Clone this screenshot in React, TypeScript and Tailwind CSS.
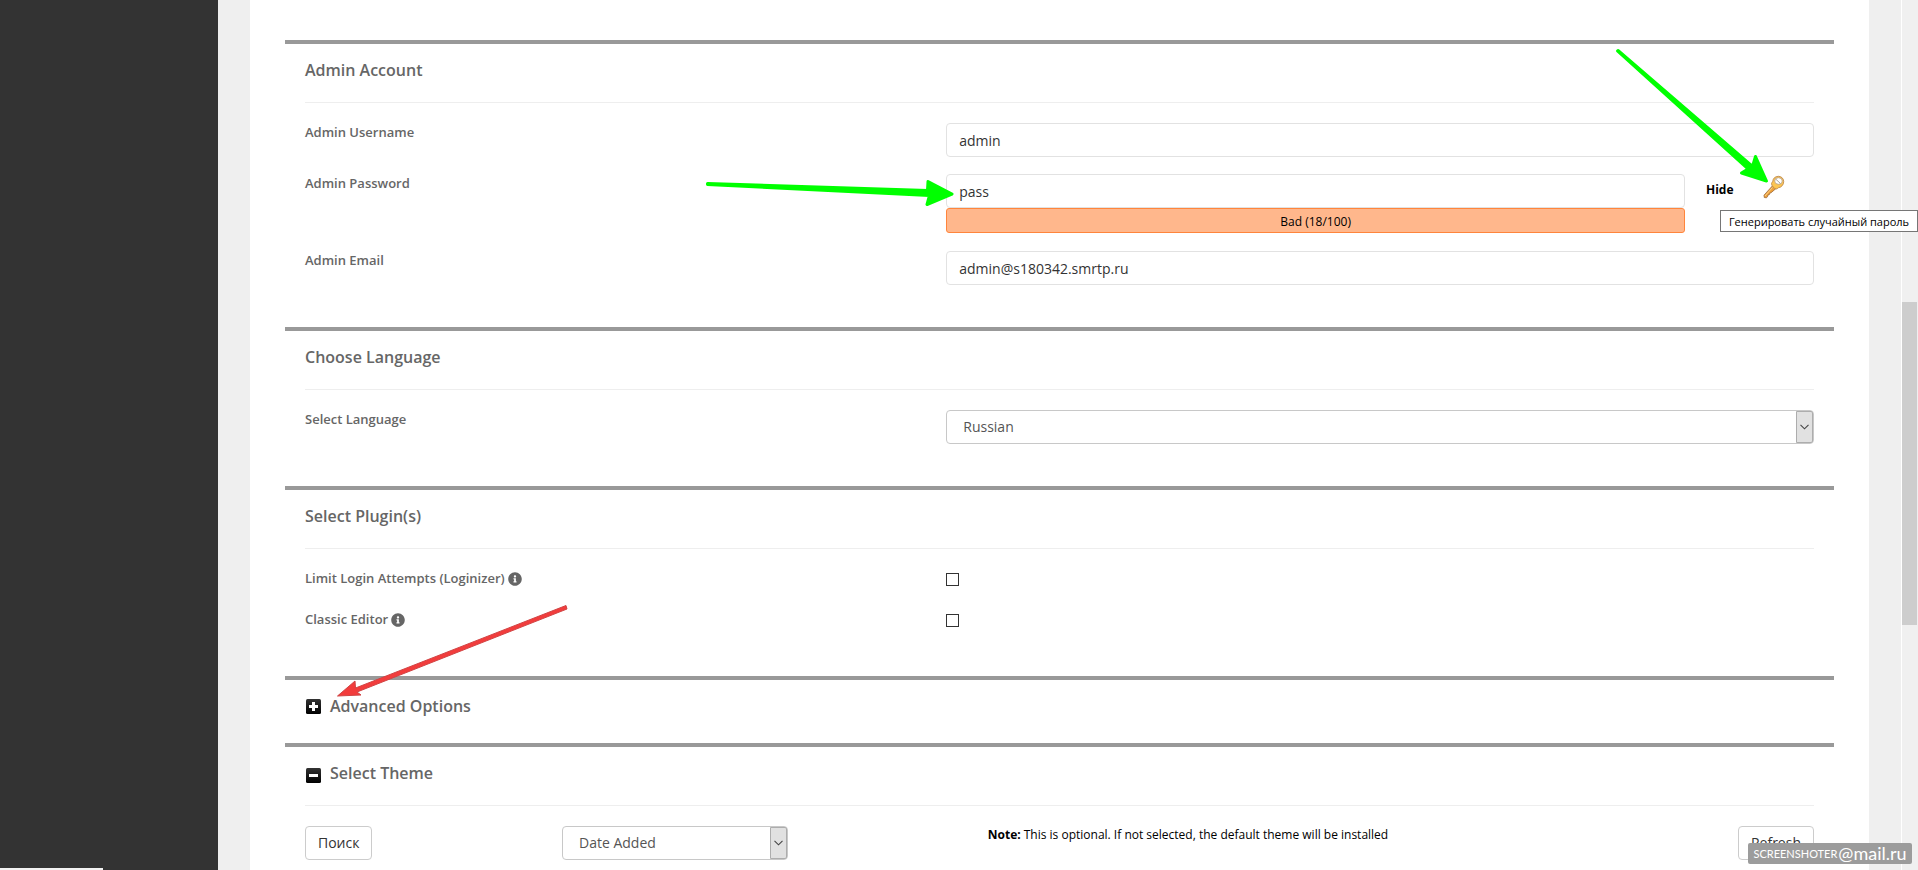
import { useState, type ReactNode } from "react";
import { FaInfoCircle } from "react-icons/fa";

type SectionProps = {
  title: string;
  icon?: ReactNode;
  children?: ReactNode;
};

function Section({ title, icon, children }: SectionProps) {
  return (
    <section className="border-t-4 border-[#999999] px-5">
      <h2 className="flex h-[58px] items-center gap-2 pb-[6px] text-base font-semibold text-[#666666]">
        {icon}
        {title}
      </h2>
      {children && <div className="border-t border-[#eeeeee] pt-5">{children}</div>}
    </section>
  );
}

type RowProps = {
  id: string;
  label: string;
  info?: boolean;
  children: ReactNode;
};

function Row({ id, label, info, children }: RowProps) {
  return (
    <div className="-mx-[15px] grid grid-cols-[5fr_7fr]">
      <div className="flex h-[18px] items-center px-[15px]">
        <label htmlFor={id} className="text-[13px] leading-[18px] font-semibold text-[#666666]">
          {label}
        </label>
        {info && <FaInfoCircle size={14} className="mt-[2px] ml-[3px] text-[#666666]" />}
      </div>
      <div className="px-[15px]">{children}</div>
    </div>
  );
}

type TextFieldProps = {
  id: string;
  value: string;
  onChange: (value: string) => void;
};

function TextField({ id, value, onChange }: TextFieldProps) {
  return (
    <input
      id={id}
      type="text"
      value={value}
      onChange={(e) => onChange(e.target.value)}
      className="block h-[34px] w-full rounded-[4px] border border-[#e2e2e2] bg-white px-3 text-sm text-[#333333]"
    />
  );
}

type SelectFieldProps = {
  id: string;
  options: string[];
  label?: string;
};

function SelectField({ id, options, label }: SelectFieldProps) {
  return (
    <div className="relative">
      <select
        id={id}
        aria-label={label}
        className="block h-[34px] w-full appearance-none rounded-[4px] border border-[#c8c8c8] bg-white pr-6 pl-4 text-sm text-[#555555]"
      >
        {options.map((o) => (
          <option key={o}>{o}</option>
        ))}
      </select>
      <span className="pointer-events-none absolute top-px right-px bottom-px flex w-[17px] items-center justify-center rounded-r-[2px] border border-[#adadad] bg-[#e1e1e1]">
        <svg width="9" height="6" viewBox="0 0 9 6" fill="none" stroke="#444444" strokeWidth="1.1">
          <path d="M.5 .8 4.5 4.8 8.5 .8" />
        </svg>
      </span>
    </div>
  );
}

function ToggleIcon({ open }: { open: boolean }) {
  return (
    <svg width="17" height="20" viewBox="0 0 17 20" aria-hidden="true">
      <defs>
        <linearGradient id="toggle" x1="0" y1="0" x2="0" y2="1">
          <stop offset="0" stopColor="#333333" />
          <stop offset="1" stopColor="#000000" />
        </linearGradient>
      </defs>
      {open ? (
        <>
          <rect x="1" y="5" width="15" height="15" rx="1.5" fill="url(#toggle)" />
          <path d="M4 11h9v3H4z" fill="#ffffff" />
        </>
      ) : (
        <>
          <rect x="1" y="3" width="15" height="15" rx="1.5" fill="url(#toggle)" />
          <path d="M4 9h9v3H4zM7 6h3v9H7z" fill="#ffffff" />
        </>
      )}
    </svg>
  );
}

function KeyIcon() {
  return (
    <svg width="22" height="24" viewBox="0 0 22 24" aria-hidden="true">
      <path
        d="M9.300 11 1 20.200l.3 2.300 2.200.3 1.300-1.700.2-1.200 1.500-.5.300-1.300 1.300-.4L13 13.500z"
        fill="#eea038"
        stroke="#9c6a3a"
        strokeWidth=".8"
      />
      <path d="m9.500 12.500-7.500 8.500" stroke="#fbd08a" strokeWidth="1" />
      <path
        d="M8.500 8.500c0-.8.6-1.500 1.200-1.800A6 6 0 0 1 15.500 1.300 5.200 5.200 0 0 1 20.700 6.500a6.200 6.200 0 0 1-5.500 6.300c-.6.8-1.200 1.200-2 1.200-1.500 0-4.700-3-4.700-5.500z"
        fill="#fcc552"
        stroke="#c08a4c"
        strokeWidth=".9"
      />
      <ellipse cx="15.500" cy="6" rx="3.800" ry="3.300" fill="#ffffff" stroke="#b59a7c" strokeWidth=".8" />
      <path d="m12.800 4.200 4.700 4.300" stroke="#a8a39b" strokeWidth="1" />
    </svg>
  );
}

function Annotations() {
  return (
    <svg
      className="pointer-events-none absolute top-0 left-0"
      width="1918"
      height="870"
      viewBox="0 0 1918 870"
      aria-hidden="true"
    >
      <g fill="#00ff00" stroke="#00ff00" strokeWidth="3" strokeLinejoin="round">
        <path d="M707.500 183.500 927.500 190.500 928 181.500 952 194 927 204.500 929.500 195.500 707.500 184.500z" />
        <path d="M1618 50.500 1752.500 166.500 1755.500 156.500 1766.500 181 1741.500 173 1748 169 1617.500 51z" />
      </g>
      <path
        d="M566 605.500 567 609 357 692 361 695 337.500 696 355 681 355.500 688z"
        fill="#f23c3c"
        stroke="#d04444"
        strokeWidth="1"
      />
    </svg>
  );
}

export default function App() {
  const [username, setUsername] = useState("admin");
  const [password, setPassword] = useState("pass");
  const [email, setEmail] = useState("admin@s180342.smrtp.ru");

  return (
    <div className="relative flex min-h-screen overflow-hidden bg-[#efefef] font-['Open_Sans',sans-serif]">
      <aside className="relative w-[218px] shrink-0 bg-[#333333]">
        <div className="absolute bottom-0 left-0 h-[2px] w-[103px] bg-[#f2f2f2]" />
      </aside>

      <main className="mx-8 min-w-0 flex-1 bg-white px-[35px] pt-10 pb-[10px]">
        <Section title="Admin Account">
          <div className="flex flex-col gap-[17px] pb-[42px]">
            <Row id="username" label="Admin Username">
              <TextField id="username" value={username} onChange={setUsername} />
            </Row>
            <Row id="password" label="Admin Password">
              <div className="flex items-start pb-px">
                <div className="flex-1">
                  <TextField id="password" value={password} onChange={setPassword} />
                  <div className="h-[25px] rounded-[3px] border border-[#ff853c] bg-[#ffb78c] text-center text-xs leading-[25px] text-black">
                    Bad (18/100)
                  </div>
                </div>
                <div className="flex w-[129px] items-start pl-[21px]">
                  <button
                    type="button"
                    className="w-7 text-left text-xs leading-8 font-bold text-black"
                  >
                    Hide
                  </button>
                  <div className="relative ml-[29px] pt-px">
                    <button
                      type="button"
                      aria-label="Генерировать случайный пароль"
                      className="block"
                    >
                      <KeyIcon />
                    </button>
                    <div
                      role="tooltip"
                      className="absolute top-9 -left-[43px] z-10 h-[22px] w-[198px] border border-[#767676] bg-white text-center text-[11px] leading-[21px] whitespace-nowrap text-black"
                    >
                      Генерировать случайный пароль
                    </div>
                  </div>
                </div>
              </div>
            </Row>
            <Row id="email" label="Admin Email">
              <TextField id="email" value={email} onChange={setEmail} />
            </Row>
          </div>
        </Section>

        <Section title="Choose Language">
          <div className="pb-[42px]">
            <Row id="language" label="Select Language">
              <SelectField id="language" options={["Russian"]} />
            </Row>
          </div>
        </Section>

        <Section title="Select Plugin(s)">
          <div className="flex flex-col gap-[23px] pb-12">
            <Row id="loginizer" label="Limit Login Attempts (Loginizer)" info>
              <input
                id="loginizer"
                type="checkbox"
                className="mt-1 block h-[13px] w-[13px] appearance-none border border-[#333333] bg-white checked:bg-[#333333]"
              />
            </Row>
            <Row id="classic-editor" label="Classic Editor" info>
              <input
                id="classic-editor"
                type="checkbox"
                className="mt-1 block h-[13px] w-[13px] appearance-none border border-[#333333] bg-white checked:bg-[#333333]"
              />
            </Row>
          </div>
        </Section>

        <div className="pb-[5px]">
          <Section title="Advanced Options" icon={<ToggleIcon open={false} />} />
        </div>

        <Section title="Select Theme" icon={<ToggleIcon open />}>
          <div className="flex items-start">
            <div className="w-[257px]">
              <button
                type="button"
                className="h-[34px] rounded-[4px] border border-[#cccccc] bg-white px-3 text-sm text-[#333333]"
              >
                Поиск
              </button>
            </div>
            <div className="w-[226px]">
              <SelectField id="sort" label="Sort themes" options={["Date Added"]} />
            </div>
            <p className="flex-1 pr-[150px] text-center text-xs leading-[18px] text-black">
              <b>Note:</b> This is optional. If not selected, the default theme will be installed
            </p>
            <button
              type="button"
              className="h-[34px] rounded-[4px] border border-[#cccccc] bg-white px-3 text-sm text-[#333333]"
            >
              Refresh
            </button>
          </div>
        </Section>
      </main>

      {/* scrollbar track */}
      <div className="w-[17px] shrink-0 border-l border-white bg-[#f0f0f0] pt-[302px]">
        <div className="mr-px h-[323px] bg-[#cdcdcd]" />
      </div>

      <Annotations />

      <div className="absolute right-[6px] bottom-[6px] flex h-[21px] w-[164px] items-center justify-center gap-px rounded-[2px] bg-[#9c9c9c] font-[Lato,sans-serif] text-white">
        <span className="text-[11px] leading-5">SCREENSHOTER</span>
        <span className="pb-[2px] text-lg leading-5">@mail.ru</span>
      </div>
    </div>
  );
}
